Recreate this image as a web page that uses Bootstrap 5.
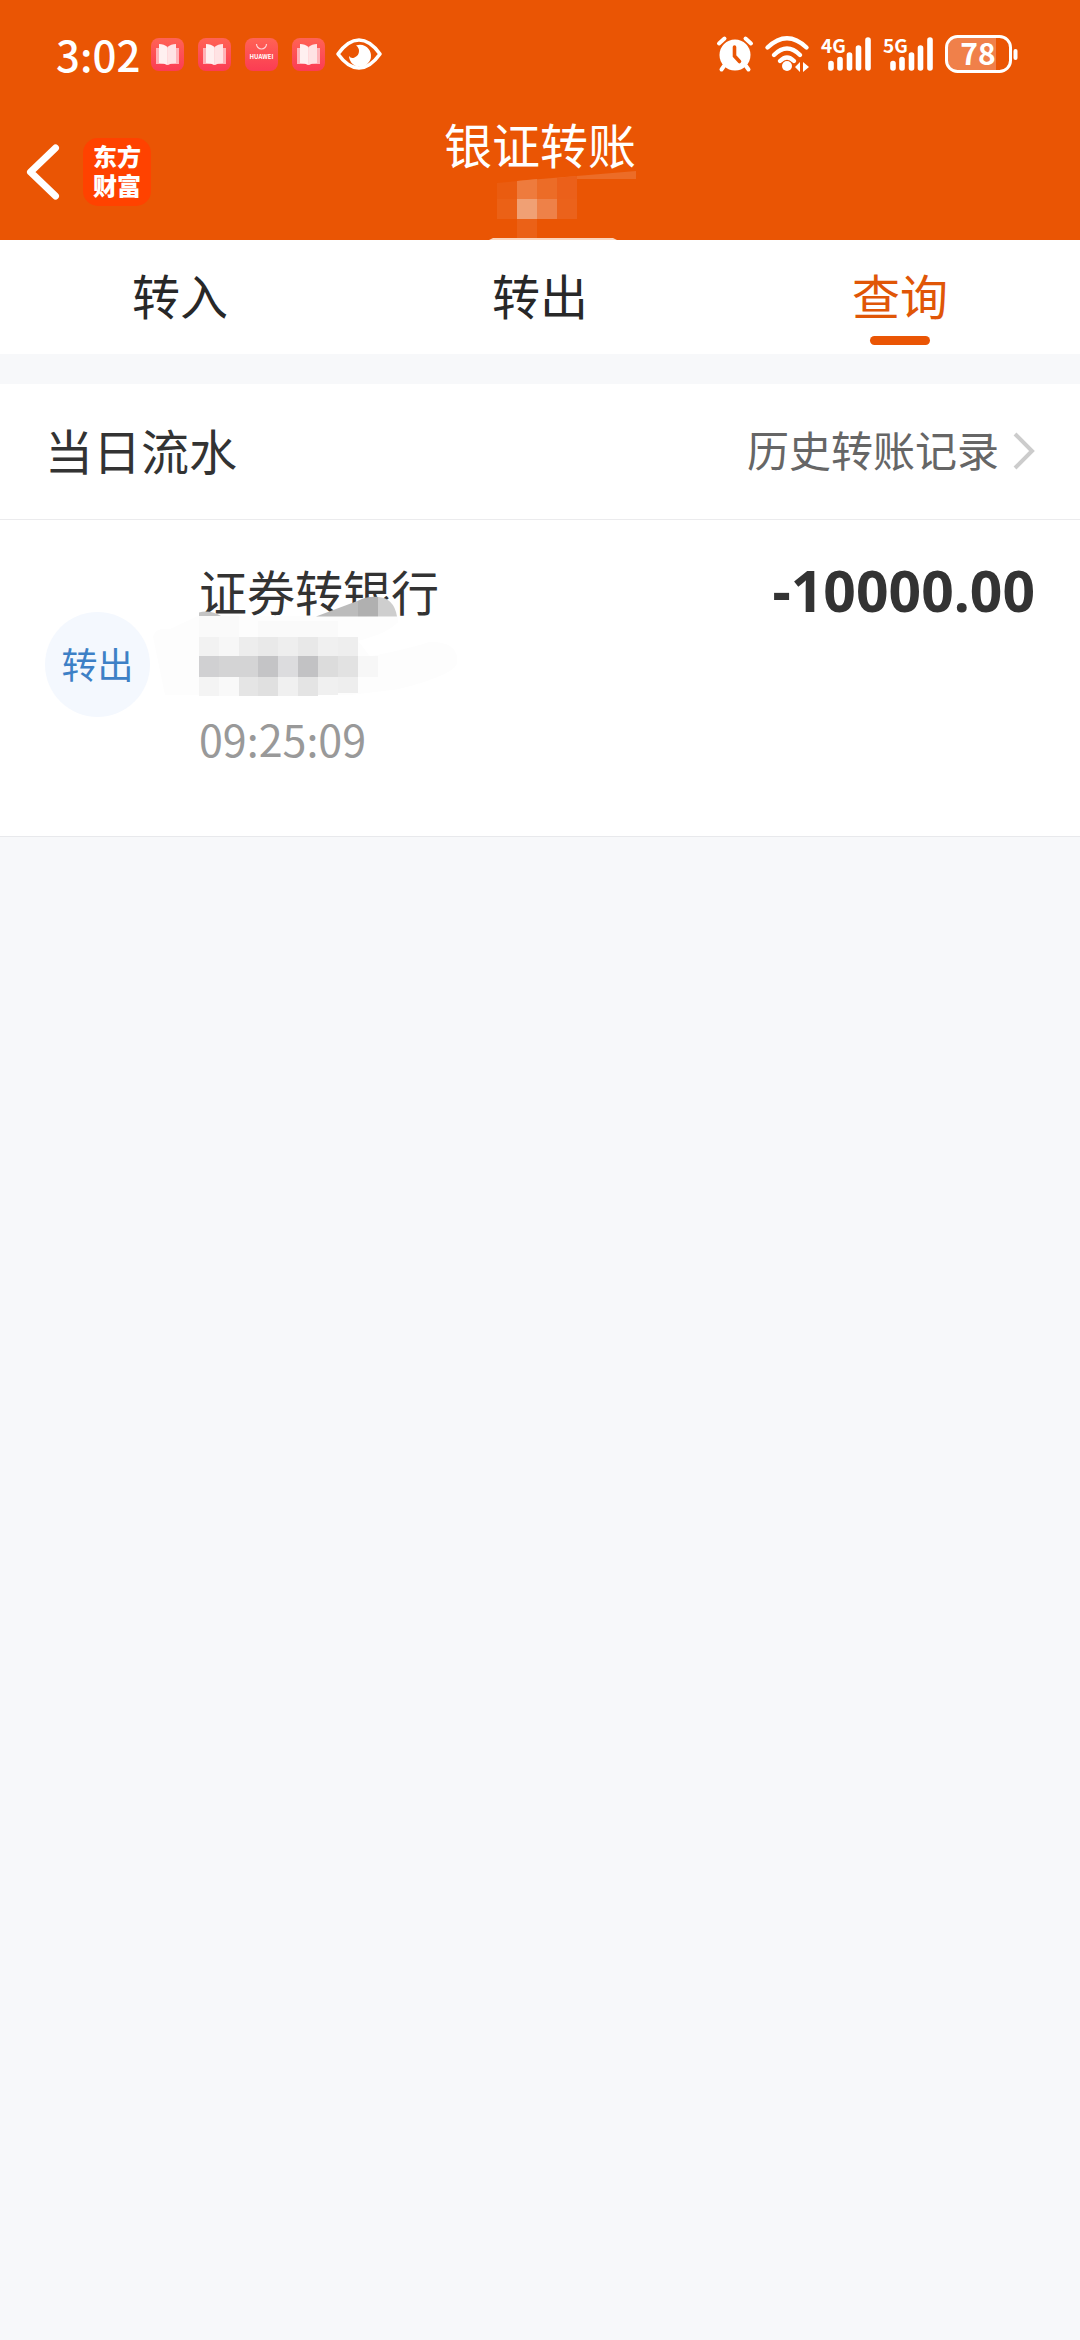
<!DOCTYPE html>
<html lang="zh-CN">
<head>
<meta charset="utf-8">
<meta name="viewport" content="width=device-width, initial-scale=1">
<title>银证转账</title>
<link href="https://cdn.jsdelivr.net/npm/bootstrap@5.3.0/dist/css/bootstrap.min.css" rel="stylesheet">
<style>
:root { --brand: #ea5504; --ink: #333; --page: #f7f8fa; }
body { background: var(--page); color: var(--ink); font-family: "Noto Sans CJK SC", "Noto Sans", sans-serif; font-size: 48px; line-height: 72px; }
svg { display: block; flex: none; overflow: visible; }
svg text { font-family: "Noto Sans CJK SC", sans-serif; }
.brandbar { background: var(--brand); color: #fff; }
.statusbar { height: 104px; padding: 4px 62px 0 56px; }
.clock { font-size: 42px; font-weight: 500; line-height: 60px; width: 95px; }
.app-icons { gap: 14px; margin-right: 11px; }
.status-icons { gap: 12px; }
.titlebar { height: 136px; padding: 0 27px; }
.side { gap: 24px; }
.app-logo { width: 68px; height: 68px; border-radius: 15px; background: #ff4200; font-size: 24px; font-weight: 900; line-height: 29px; padding-top: 3px; }
.page-title { font-size: 48px; font-weight: 400; line-height: 78px; }
.account-mask { left: 50%; top: 66px; transform: translateX(-50%); }
.tabs { height: 114px; }
.tabs .nav-link { color: #282828; padding: 12px 0 0; line-height: 84px; height: 114px; }
.tabs .nav-link.active { color: #e05607; }
.tabs .active::after { content: ""; display: block; width: 60px; height: 9px; border-radius: 5px; background: var(--brand); margin: 0 auto; }
.section-head { height: 136px; margin-top: 30px; padding: 0 45px 6px; border-bottom: 1px solid #ebebed; }
.section-name { font-size: 48px; font-weight: 400; line-height: 72px; }
.history { font-size: 42px; color: #666; gap: 14px; }
.record { padding: 34px 45px 62px; border-bottom: 1px solid #e8e9ec; }
.kind { width: 105px; height: 105px; background: #f4f8fe; color: #3d80c6; font-size: 36px; margin-right: 49px; padding-bottom: 2px; }
.bank { height: 76px; }
.bank-mask { left: -49px; top: -31px; }
.time { font-size: 43px; color: #999; }
.amount { font-family: "Noto Sans", sans-serif; font-size: 57px; font-weight: 700; }
</style>
</head>
<body>
<svg width="0" height="0" class="position-absolute" aria-hidden="true">
  <defs>
    <linearGradient id="pink" x1="0" y1="0" x2="0" y2="1"><stop offset="0" stop-color="#ff6355"/><stop offset="1" stop-color="#fb3c54"/></linearGradient>
    <symbol id="reader" viewBox="0 0 33 33">
      <rect width="33" height="33" rx="8" fill="url(#pink)"/>
      <path d="M5 10H28V26H19L16.500 27 14 26H5Z" fill="#ffb3b8"/>
      <path d="M8 6Q13 6 16.500 9V27Q13 25 8 25Z" fill="#fff0f0"/>
      <path d="M25 6Q20 6 16.500 9V27Q20 25 25 25Z" fill="#ffe3e4"/>
    </symbol>
    <symbol id="bars" viewBox="0 0 43 34">
      <path d="M3 26.500V31M12 22.500V31M21.500 18V31M30.500 11V31M40 3V31" stroke="#fff" stroke-width="5.600" stroke-linecap="round"/>
    </symbol>
  </defs>
</svg>

<header class="brandbar">
  <div class="statusbar d-flex align-items-center justify-content-between">
    <div class="d-flex align-items-center">
      <span class="clock">3:02</span>
      <div class="app-icons d-flex">
        <svg width="33" height="33"><use href="#reader"/></svg>
        <svg width="33" height="33"><use href="#reader"/></svg>
        <svg width="33" height="33" viewBox="0 0 33 33"><rect width="33" height="33" rx="8" fill="url(#pink)"/><path d="M11.500 6A5 5 0 0 0 21.500 6" fill="none" stroke="#ffd5d5" stroke-width="1.200"/><text x="16.500" y="21" text-anchor="middle" font-size="6" font-weight="700" fill="#fff">HUAWEI</text></svg>
        <svg width="33" height="33"><use href="#reader"/></svg>
      </div>
      <svg width="46" height="32" viewBox="0 0 46 32" role="img" aria-label="护眼模式">
        <path d="M2 16Q12 2 23 2T44 16Q34 30 23 30T2 16Z" fill="none" stroke="#fff" stroke-width="3.600" stroke-linejoin="round"/>
        <path d="M20 7.500A11 11 0 1 1 13 18Q15 21 18.500 19.500Q23 17.500 23 13Q23 9.500 20 7.500Z" fill="#fff"/>
      </svg>
    </div>
    <div class="status-icons d-flex align-items-center">
      <svg width="36" height="36" viewBox="0 0 36 36" role="img" aria-label="闹钟">
        <circle cx="18" cy="19" r="15.500" fill="#fff"/>
        <path d="M2 7.500 7.500 2.500M34 7.500 28.500 2.500M7 30 4.500 33.500M29 30 31.500 33.500" stroke="#fff" stroke-width="4" stroke-linecap="round"/>
        <path d="M17.500 11V20L22.500 25.500" fill="none" stroke="#ea5504" stroke-width="3.600" stroke-linecap="round"/>
      </svg>
      <svg width="44" height="36" viewBox="0 0 44 36" role="img" aria-label="无线网络">
        <path d="M2.500 11.500Q22-7 41.500 11.500M9 19Q22 6 35 19M15 25Q22 18 29 25" fill="none" stroke="#fff" stroke-width="4.400" stroke-linecap="round"/>
        <circle cx="22" cy="30" r="5" fill="#fff"/>
        <path d="M30 31 35 26V36ZM44 31 38 26V36Z" fill="#fff"/>
      </svg>
      <svg width="50" height="36" viewBox="0 0 50 36" role="img" aria-label="4G 信号">
        <text x="0" y="17" font-size="19" font-weight="700" fill="#fff">4G</text><use href="#bars" x="7" y="1" width="43" height="34"/>
      </svg>
      <svg width="50" height="36" viewBox="0 0 50 36" role="img" aria-label="5G 信号">
        <text x="0" y="17" font-size="19" font-weight="700" fill="#fff">5G</text><use href="#bars" x="7" y="1" width="43" height="34"/>
      </svg>
      <svg width="73" height="38" viewBox="0 0 73 38" role="img" aria-label="电量">
        <path d="M12 3H51V35H12Q3 35 3 26V12Q3 3 12 3Z" fill="#f0804a"/>
        <rect x="1.500" y="1.500" width="64" height="35" rx="11" fill="none" stroke="#fff" stroke-width="3"/>
        <path d="M70.500 16V23" stroke="#fff" stroke-width="4" stroke-linecap="round"/>
        <text x="33" y="30" text-anchor="middle" font-size="30" font-weight="700" fill="#fff">78</text>
      </svg>
    </div>
  </div>
  <div class="titlebar position-relative row g-0 align-items-center">
    <div class="side col d-flex align-items-center">
      <button type="button" class="btn p-0 border-0" aria-label="返回">
        <svg width="32" height="56" viewBox="0 0 32 56"><path d="M28.500 4 3.500 28 28.500 52" fill="none" stroke="#fff" stroke-width="7" stroke-linecap="round" stroke-linejoin="round"/></svg>
      </button>
      <div class="app-logo text-center">东方<br>财富</div>
    </div>
    <h1 class="page-title col-auto align-self-start m-0">银证转账</h1>
    <div class="col"></div>
    <svg class="account-mask position-absolute" width="200" height="70" viewBox="440 170 200 70" aria-hidden="true">
      <path d="M517 181 636 171V179H577V199H517Z" fill="#ec6c27"/>
      <path d="M517 181 537 179V199H517Z" fill="#ee7b3d"/>
      <path d="M557 178 577 176V199H557Z" fill="#eb601a"/>
      <path d="M497 183 517 181V239H497V219H517V199H497Z" fill="#ea5c10"/>
      <path d="M497 199H517V219H497Z" fill="#eb6116"/>
      <path d="M517 199H537V219H517Z" fill="#f0a074"/>
      <path d="M537 199H557V219H537Z" fill="#ee8148"/>
      <path d="M557 199H577V219H557Z" fill="#eb621b"/>
      <path d="M517 219H537V240H517Z" fill="#eb6117"/>
      <path d="M497 219H517V240H497Z" fill="#ea5504"/>
      <path d="M489 240 493 238H613L617 240Z" fill="#fbd5bd"/>
    </svg>
  </div>
</header>

<nav class="tabs nav nav-justified bg-white flex-nowrap">
  <a class="nav-link nav-item" href="#in">转入</a>
  <a class="nav-link nav-item" href="#out">转出</a>
  <a class="nav-link nav-item active" href="#query" aria-current="page">查询</a>
</nav>

<main>
  <div class="section-head bg-white d-flex align-items-center justify-content-between">
    <h2 class="section-name m-0">当日流水</h2>
    <a class="history d-flex align-items-center text-decoration-none" href="#history">历史转账记录
      <svg class="mt-1" width="22" height="38" viewBox="0 0 22 38" aria-hidden="true"><path d="M2 2 19 19 2 36" fill="none" stroke="#ccc" stroke-width="4"/></svg>
    </a>
  </div>
  <article class="record bg-white d-flex">
    <div class="kind rounded-circle d-flex align-items-center justify-content-center align-self-center">转出</div>
    <div class="flex-grow-1">
      <div>证券转银行</div>
      <div class="bank position-relative">
        <svg class="bank-mask position-absolute" width="310" height="103" viewBox="150 597 310 106" preserveAspectRatio="none" aria-hidden="true">
          <path d="M153 640Q155 630 170 632L199 618 398 619V625Q385 638 358 644L370 660Q410 652 430 645Q460 645 457 668Q452 680 398 694L350 700H165Z" fill="#fdfdfd"/>
          <path d="M199 615Q210 612 222 619H199Z" fill="#c4c4c4"/>
          <path d="M316 619 358 603V619Z" fill="#bcbcbc"/>
          <path d="M358 603Q367 598 378 599V619H358Z" fill="#b0b0b0"/>
          <path d="M378 599Q394 600 397 619H378Z" fill="#cecece"/>
          <g shape-rendering="crispEdges">
            <path d="M199 619H239V640H199Z" fill="#fafafa"/><path d="M258 624H338V640H258Z" fill="#fafafa"/>
            <path d="M199 640H219V660H199Z" fill="#f2f2f2"/><path d="M219 640H239V660H219Z" fill="#f7f7f7"/><path d="M239 640H258V660H239Z" fill="#ededed"/><path d="M258 640H278V660H258Z" fill="#e9e9e9"/><path d="M278 640H298V660H278Z" fill="#eee"/><path d="M298 640H318V660H298Z" fill="#e8e8e8"/><path d="M318 640H338V660H318Z" fill="#f0f0f0"/><path d="M338 640H358V660H338Z" fill="#eee"/>
            <path d="M199 660H219V681H199Z" fill="#d0d0d2"/><path d="M219 660H258V681H219Z" fill="#d4d4d5"/><path d="M258 660H278V681H258Z" fill="#c4c4c6"/><path d="M278 660H298V681H278Z" fill="#dcdcde"/><path d="M298 660H318V681H298Z" fill="#c2c2c4"/><path d="M318 660H338V681H318Z" fill="#dcdcdc"/><path d="M338 660H358V681H338Z" fill="#e2e2e2"/><path d="M358 660H378V681H358Z" fill="#f7f7f7"/>
            <path d="M199 681H219V701H199Z" fill="#f4f4f4"/><path d="M219 681H239V701H219Z" fill="#f9f9f9"/><path d="M239 681H258V701H239Z" fill="#e5e5e5"/><path d="M258 681H278V701H258Z" fill="#e0e0e0"/><path d="M278 681H298V701H278Z" fill="#f0f0f0"/><path d="M298 681H318V701H298Z" fill="#e4e4e4"/><path d="M318 681H338V700H318Z" fill="#f0f0f0"/><path d="M338 681H358V698H338Z" fill="#eee"/>
          </g>
        </svg>
      </div>
      <time class="time d-block">09:25:09</time>
    </div>
    <div class="amount">-10000.00</div>
  </article>
</main>
<script src="https://cdn.jsdelivr.net/npm/bootstrap@5.3.0/dist/js/bootstrap.bundle.min.js"></script>
</body>
</html>
